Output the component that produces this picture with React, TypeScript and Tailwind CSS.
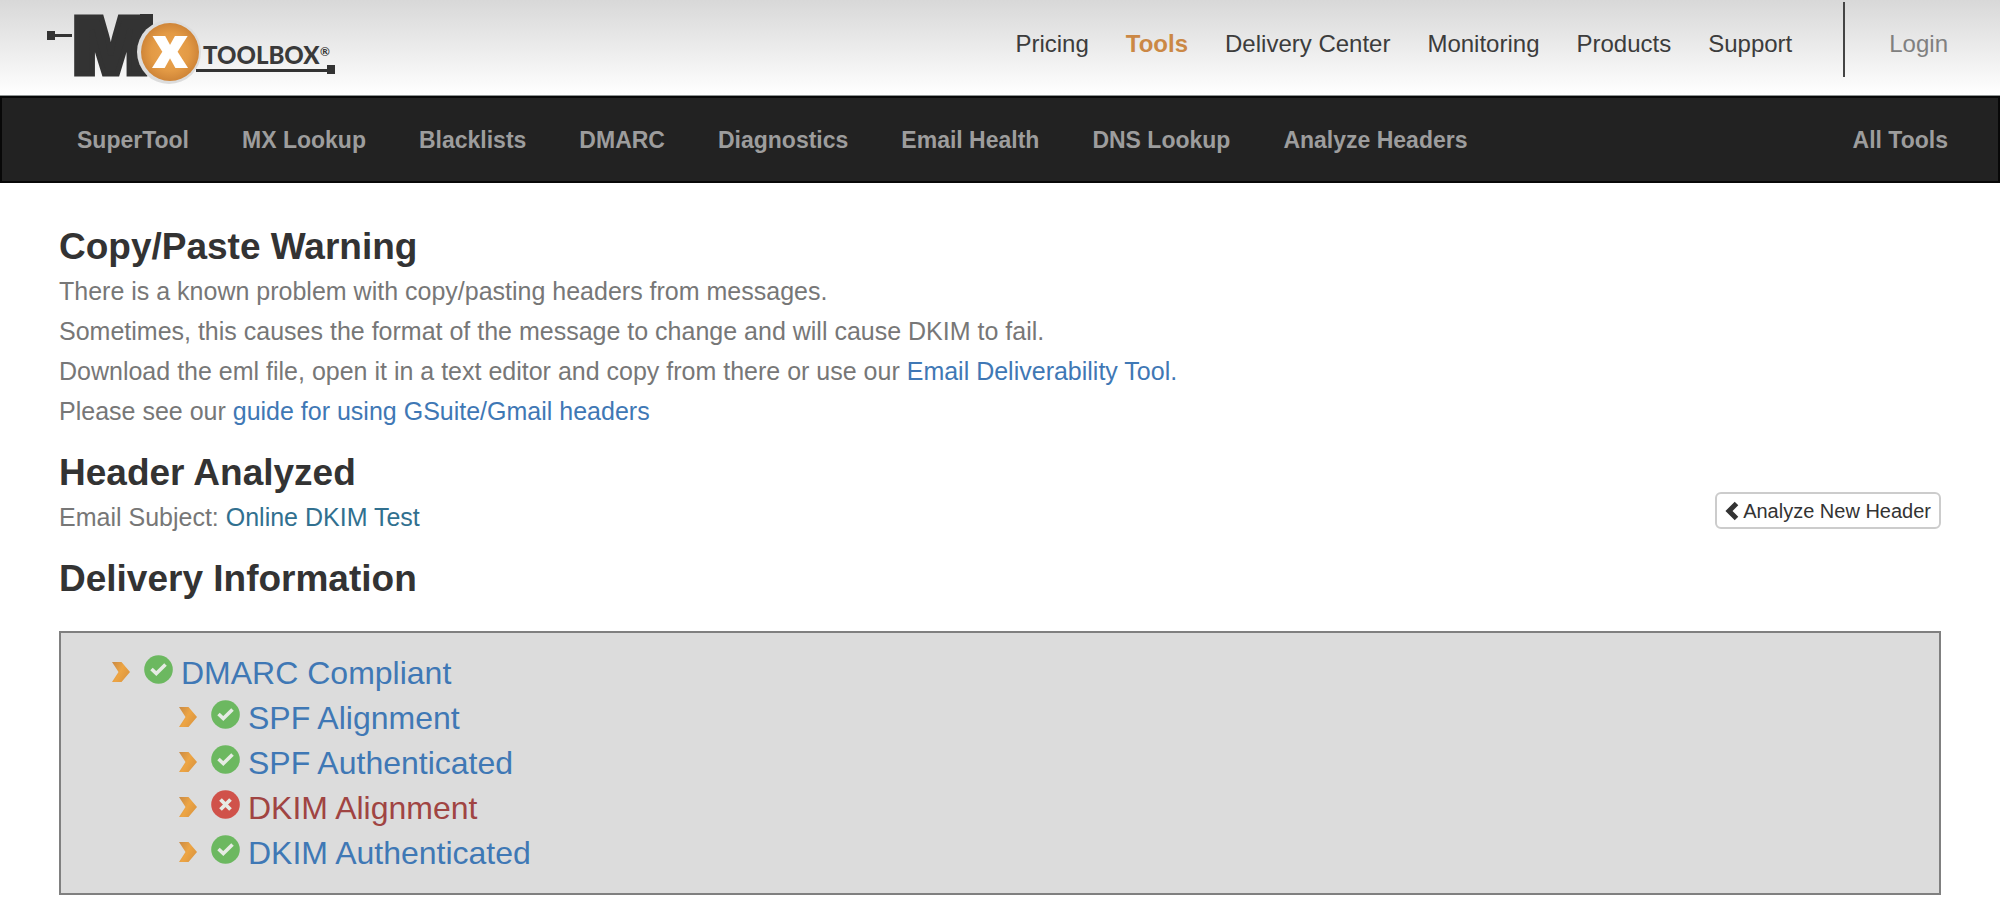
// src/App.tsx

import React from 'react';
import { clsx } from 'clsx';

const mainLinks = [
  { name: 'Pricing', href: '#pricing' },
  { name: 'Tools', href: '#tools', active: true },
  { name: 'Delivery Center', href: '#delivery-center' },
  { name: 'Monitoring', href: '#monitoring' },
  { name: 'Products', href: '#products' },
  { name: 'Support', href: '#support' },
];

const toolLinks = [
  { name: 'SuperTool', href: '#supertool' },
  { name: 'MX Lookup', href: '#mx' },
  { name: 'Blacklists', href: '#blacklists' },
  { name: 'DMARC', href: '#dmarc' },
  { name: 'Diagnostics', href: '#diagnostics' },
  { name: 'Email Health', href: '#email-health' },
  { name: 'DNS Lookup', href: '#dns' },
  { name: 'Analyze Headers', href: '#headers' },
];

const checks = [
  { name: 'DMARC Compliant', passed: true, nested: false },
  { name: 'SPF Alignment', passed: true, nested: true },
  { name: 'SPF Authenticated', passed: true, nested: true },
  { name: 'DKIM Alignment', passed: false, nested: true },
  { name: 'DKIM Authenticated', passed: true, nested: true },
];

function Logo() {
  return (
    <svg
      className="overflow-visible"
      width="290"
      height="95"
      viewBox="46 0 290 95"
      role="img"
      aria-label="MxToolbox"
    >
      <defs>
        <radialGradient id="logoOrange">
          <stop offset="0" stopColor="#eba550" />
          <stop offset="0.65" stopColor="#e39a45" />
          <stop offset="1" stopColor="#cf8538" />
        </radialGradient>
      </defs>
      <g fill="#333">
        <rect x="47" y="31" width="8" height="9" />
        <rect x="54" y="34" width="18" height="3" />
        <text
          x="73"
          y="74"
          fontFamily="Inter, sans-serif"
          fontWeight="900"
          fontSize="79"
          stroke="#333"
          strokeWidth="5"
        >
          M
        </text>
        <rect x="140" y="14" width="13" height="30" />
        <rect x="196" y="69" width="132" height="3" />
        <rect x="327" y="65" width="8" height="9" />
      </g>
      <circle cx="169" cy="52" r="32" fill="#dcdcdc" />
      <circle cx="170" cy="52" r="29" fill="url(#logoOrange)" />
      <text
        x="170"
        y="68"
        textAnchor="middle"
        fontFamily="Open Sans, sans-serif"
        fontWeight="800"
        fontSize="58"
        fill="#fff"
      >
        x
      </text>
      <text x="203" y="64" fontFamily="Lato, sans-serif" fontWeight="900" fontSize="24" fill="#3a3a3a">
        TOOLBOX
      </text>
      <text x="320" y="56" fontFamily="Lato, sans-serif" fontWeight="700" fontSize="12" fill="#3a3a3a">
        ®
      </text>
    </svg>
  );
}

function Arrow() {
  return (
    <svg className="mb-1 shrink-0" width="18" height="22" viewBox="0 0 18 22" aria-hidden="true">
      <defs>
        <linearGradient id="arrow" x1="0" y1="0" x2="1" y2="0.6">
          <stop offset="0" stopColor="#c98a45" />
          <stop offset="0.55" stopColor="#eda544" />
          <stop offset="1" stopColor="#dc9640" />
        </linearGradient>
      </defs>
      <path d="M0 1h9.500L18 11l-8.500 10H0l6.500-10z" fill="url(#arrow)" />
    </svg>
  );
}

function StatusIcon({ passed }: { passed: boolean }) {
  return (
    <svg className="shrink-0" width="29" height="29" viewBox="0 0 29 29" aria-hidden="true">
      <circle cx="14.5" cy="14.5" r="14.3" fill={passed ? '#6cb860' : '#d0524a'} />
      <path
        d={passed ? 'M7.500 14l4.800 4.500L21.500 9.500' : 'M9.500 9.500l10 10M19.500 9.500l-10 10'}
        fill="none"
        stroke="#e6ebe4"
        strokeWidth={passed ? 3.6 : 3.8}
      />
    </svg>
  );
}

function Header() {
  return (
    <header>
      <div className="flex h-24 items-start justify-between border-b border-[#8f9494] bg-linear-to-b from-[#d8d8d8] to-white pr-[52px] pl-[46px]">
        <a href="#home">
          <Logo />
        </a>
        <div className="flex items-start text-2xl leading-7 text-[#3c3c3c]">
          <nav className="flex gap-[37px] pt-[30px]" aria-label="Main">
            {mainLinks.map((item) => (
              <a
                key={item.name}
                href={item.href}
                className={clsx(item.active && 'font-bold text-[#cb8845]')}
              >
                {item.name}
              </a>
            ))}
          </nav>
          <div className="mt-0.5 ml-[51px] h-[75px] w-0.5 bg-[#444]" />
          <a href="#login" className="pt-[30px] pl-11 text-[#808080]">
            Login
          </a>
        </div>
      </div>
      <nav
        className="flex h-[87px] items-center justify-between border-2 border-[#080808] bg-[#222] pt-0.5 pr-[50px] pl-[75px] text-[23px] font-bold text-[#9d9d9d]"
        aria-label="Tools"
      >
        <div className="flex gap-[53px]">
          {toolLinks.map((item) => (
            <a key={item.name} href={item.href}>
              {item.name}
            </a>
          ))}
        </div>
        <a href="#all-tools">All Tools</a>
      </nav>
    </header>
  );
}

function App() {
  return (
    <div className="min-h-screen bg-white font-['Liberation_Sans',Arial,sans-serif] text-[#777]">
      <Header />

      <main className="px-[59px] pt-11 pb-4 text-[25px] leading-10">
        {/* Warning */}
        <section>
          <h2 className="text-[37px] leading-10 font-bold text-[#333]">Copy/Paste Warning</h2>
          <div className="pt-1">
            <p>There is a known problem with copy/pasting headers from messages.</p>
            <p>Sometimes, this causes the format of the message to change and will cause DKIM to fail.</p>
            <p>
              Download the eml file, open it in a text editor and copy from there or use our{' '}
              <a href="#deliverability" className="text-[#3f78b5]">
                Email Deliverability Tool.
              </a>
            </p>
            <p>
              Please see our{' '}
              <a href="#guide" className="text-[#3f78b5]">
                guide for using GSuite/Gmail headers
              </a>
            </p>
          </div>
        </section>

        {/* Subject */}
        <section className="flex items-end justify-between pt-[22px]">
          <div>
            <h2 className="text-[37px] leading-10 font-bold text-[#333]">Header Analyzed</h2>
            <p className="pt-1">
              Email Subject: <span className="text-[#31708f]">Online DKIM Test</span>
            </p>
          </div>
          <button
            type="button"
            className="mb-2 flex h-[37px] items-center gap-1 rounded-md border-2 border-[#ccc] bg-white px-2 text-xl text-[#333]"
          >
            <svg width="14" height="20" viewBox="0 0 14 20" aria-hidden="true">
              <path d="M11.500 2.500L4 10l7.500 7.500" fill="none" stroke="#333" strokeWidth="5" />
            </svg>
            Analyze New Header
          </button>
        </section>

        {/* Results */}
        <section className="pt-[22px]">
          <h2 className="text-[37px] leading-10 font-bold text-[#333]">Delivery Information</h2>
          <ul className="mt-8 border-2 border-[#808080] bg-[#dcdcdc] pt-[18px] pb-[17px] pl-[51px] text-[32px] leading-[45px]">
            {checks.map((check) => (
              <li key={check.name} className={clsx('flex items-center', check.nested && 'pl-[67px]')}>
                <Arrow />
                <span className="pb-2 pl-[14px]">
                  <StatusIcon passed={check.passed} />
                </span>
                <a
                  href="#details"
                  className={clsx('pl-2', check.passed ? 'text-[#3f78b5]' : 'text-[#a04442]')}
                >
                  {check.name}
                </a>
              </li>
            ))}
          </ul>
        </section>
      </main>
    </div>
  );
}

export default App;
